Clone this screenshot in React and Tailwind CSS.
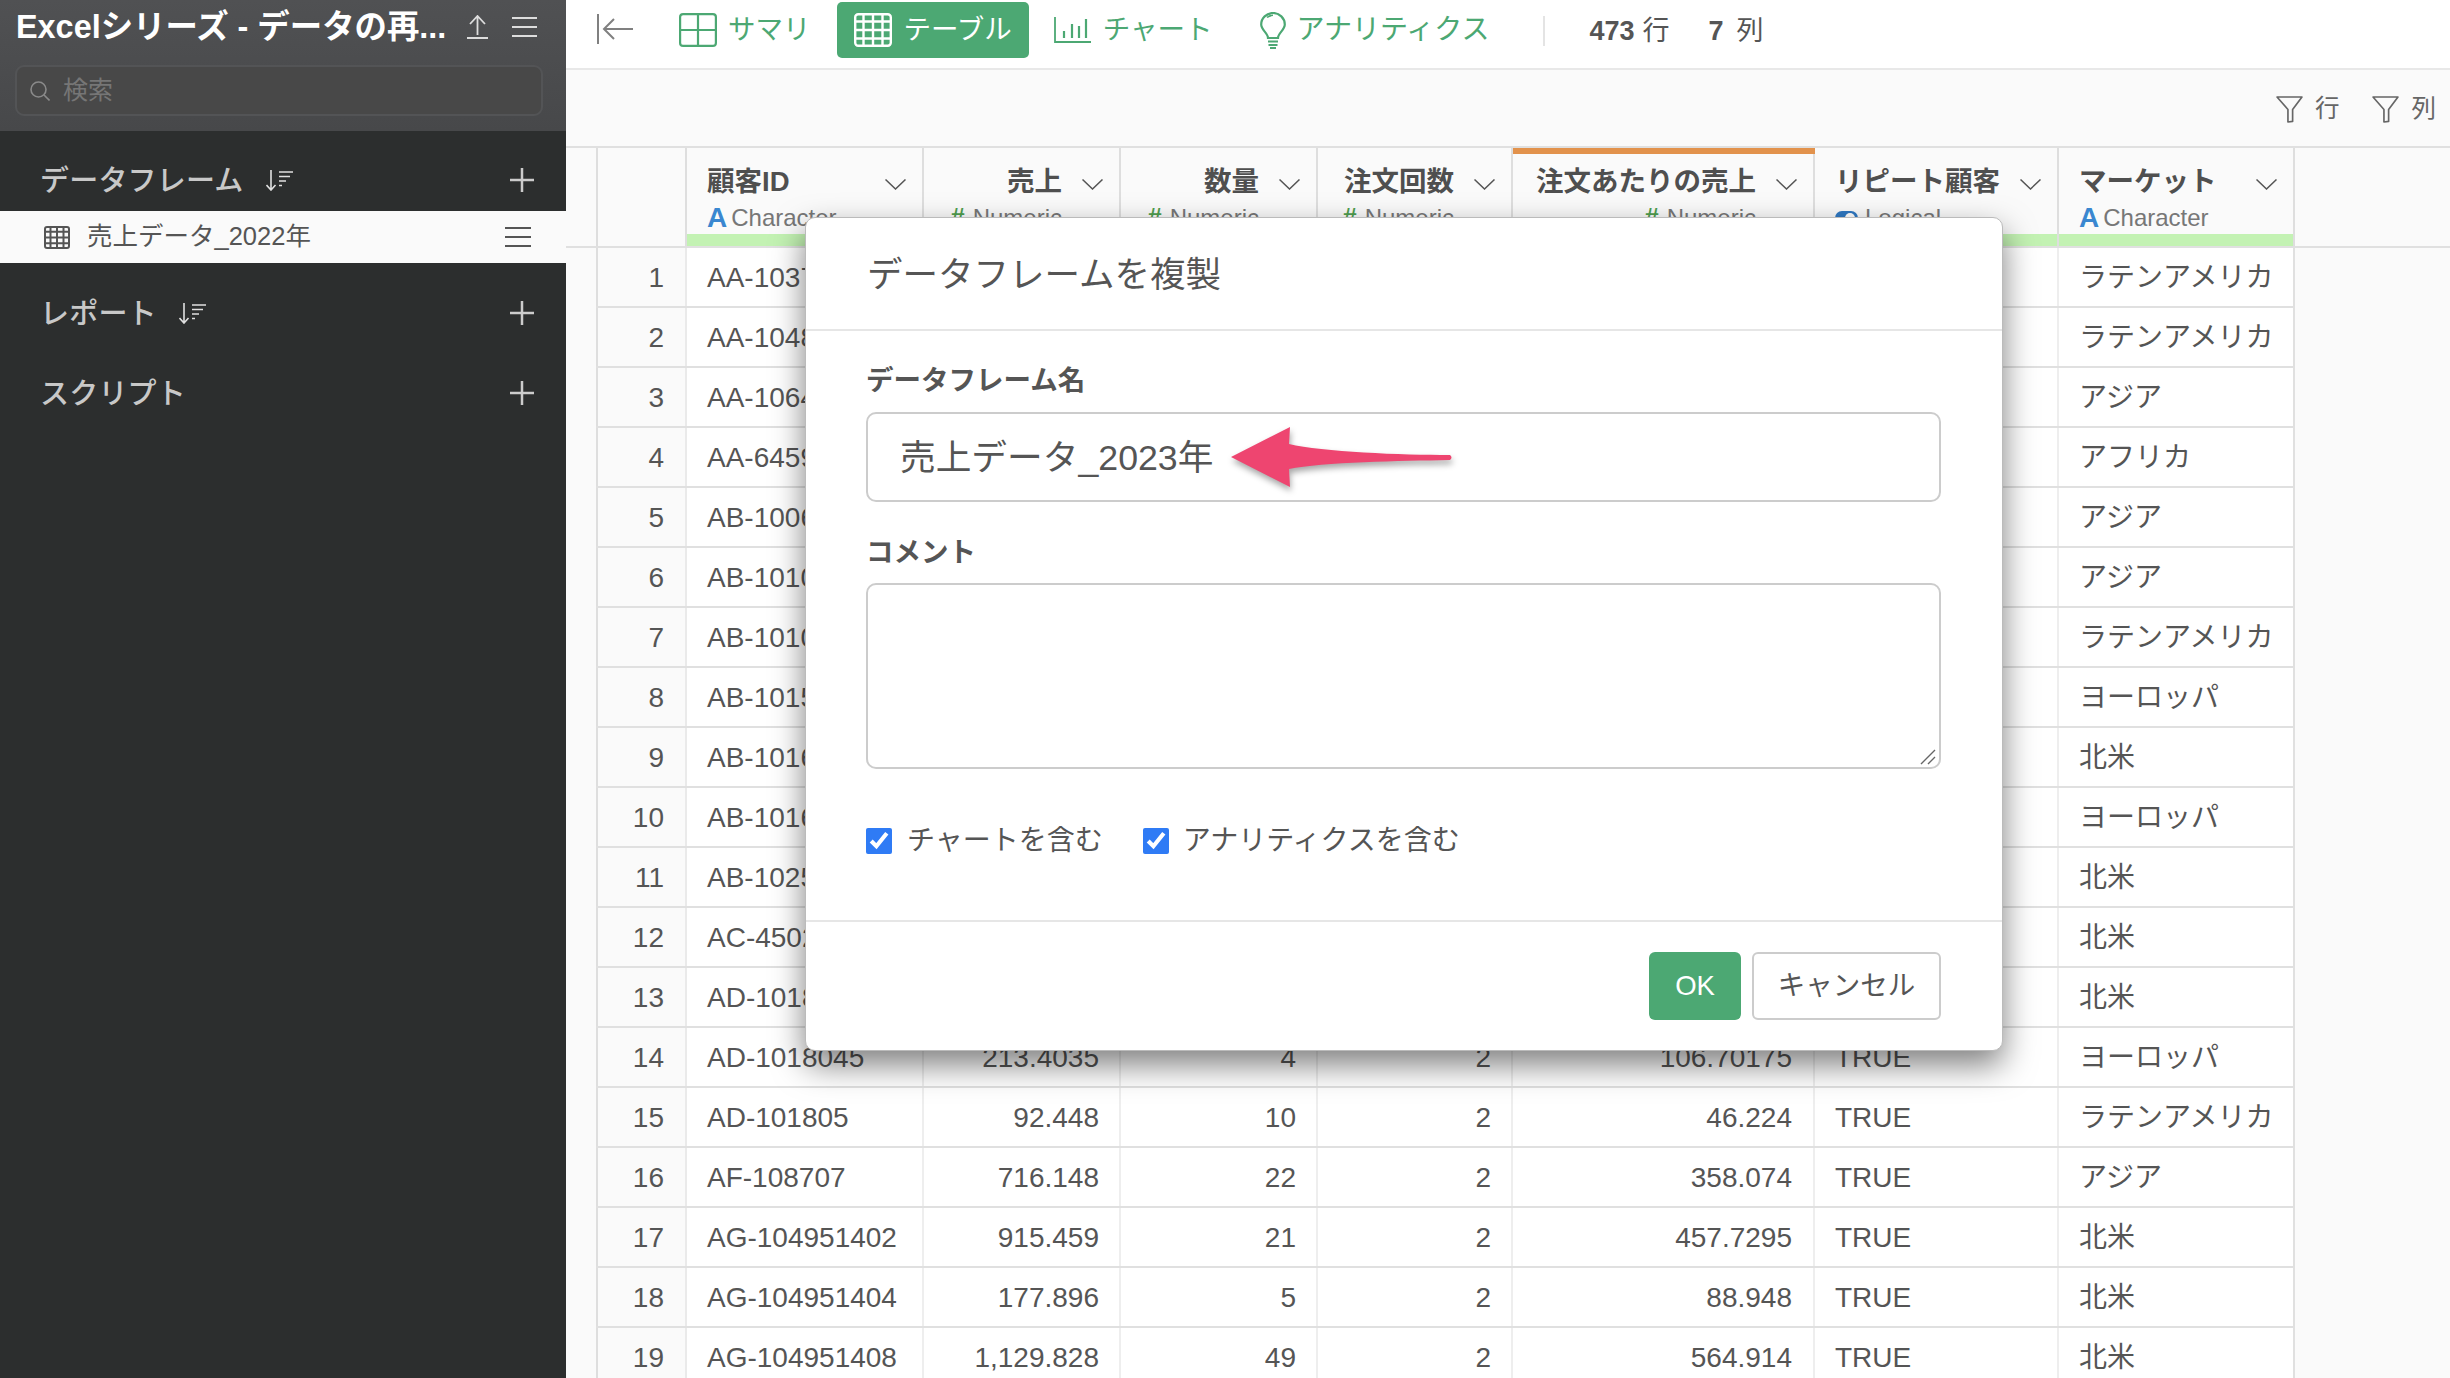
import React from "react";

const G = "#4ca873";

function Hamburger({ w = 25, h = 20, color = "#ddd", sw = 2 }) {
  return (
    <svg width={w} height={h} viewBox={`0 0 ${w} ${h}`} fill="none" stroke={color} strokeWidth={sw}>
      <path d={`M0 1H${w}M0 ${h / 2}H${w}M0 ${h - 1}H${w}`} />
    </svg>
  );
}
function Plus() {
  return (
    <svg width="24" height="24" viewBox="0 0 24 24" stroke="#ccc" strokeWidth="2.5">
      <path d="M12 0V24M0 12H24" />
    </svg>
  );
}
function SortIcon() {
  return (
    <svg width="28" height="21" viewBox="0 0 28 21" fill="none" stroke="#e0e0e0" strokeWidth="1.6">
      <path d="M5 0V20M0.5 15L5 20L9.5 15" />
      <path d="M13 2H27M13 6.5H24M13 11H20M13 15.5H16" />
    </svg>
  );
}
function TableIcon({ w = 26, h = 23, color = "#555", cols = 4, rows = 4, sw = 2, r = 2 }) {
  const lines = [];
  for (let i = 1; i < cols; i++) lines.push(`M${(w * i) / cols} 1V${h - 1}`);
  for (let i = 1; i < rows; i++) lines.push(`M1 ${(h * i) / rows}H${w - 1}`);
  return (
    <svg width={w} height={h} viewBox={`0 0 ${w} ${h}`} fill="none" stroke={color} strokeWidth={sw}>
      <rect x={sw / 2} y={sw / 2} width={w - sw} height={h - sw} rx={r} />
      <path d={lines.join("")} />
    </svg>
  );
}
function Chevron() {
  return (
    <svg width="21" height="11" viewBox="0 0 21 11" fill="none" stroke="#555" strokeWidth="1.5" className="shrink-0">
      <path d="M0.5 0.5L10.5 10L20.5 0.5" />
    </svg>
  );
}
function Funnel() {
  return (
    <svg width="27" height="27" viewBox="0 0 26 26" fill="none" stroke="#666" strokeWidth="1.6">
      <path d="M1 1H25L16 13V24.5L11.5 25V13Z" strokeLinejoin="round" />
    </svg>
  );
}

const columns = [
  { name: "顧客ID", type: "char", left: true },
  { name: "売上", type: "num" },
  { name: "数量", type: "num" },
  { name: "注文回数", type: "num" },
  { name: "注文あたりの売上", type: "num", orange: true },
  { name: "リピート顧客", type: "logical", left: true },
  { name: "マーケット", type: "char", left: true },
];

const rows = [
  ["AA-1037", "", "", "", "", "", "ラテンアメリカ"],
  ["AA-1048", "", "", "", "", "", "ラテンアメリカ"],
  ["AA-1064", "", "", "", "", "", "アジア"],
  ["AA-6459", "", "", "", "", "", "アフリカ"],
  ["AB-1006", "", "", "", "", "", "アジア"],
  ["AB-1010", "", "", "", "", "", "アジア"],
  ["AB-1010", "", "", "", "", "", "ラテンアメリカ"],
  ["AB-1015", "", "", "", "", "", "ヨーロッパ"],
  ["AB-1016", "", "", "", "", "", "北米"],
  ["AB-1016", "", "", "", "", "", "ヨーロッパ"],
  ["AB-1025", "", "", "", "", "", "北米"],
  ["AC-4502", "", "", "", "", "", "北米"],
  ["AD-1018", "", "", "", "", "", "北米"],
  ["AD-1018045", "213.4035", "4", "2", "106.70175", "TRUE", "ヨーロッパ"],
  ["AD-101805", "92.448", "10", "2", "46.224", "TRUE", "ラテンアメリカ"],
  ["AF-108707", "716.148", "22", "2", "358.074", "TRUE", "アジア"],
  ["AG-104951402", "915.459", "21", "2", "457.7295", "TRUE", "北米"],
  ["AG-104951404", "177.896", "5", "2", "88.948", "TRUE", "北米"],
  ["AG-104951408", "1,129.828", "49", "2", "564.914", "TRUE", "北米"],
];

function TypeLabel({ type }) {
  if (type === "char")
    return (
      <>
        <span className="font-bold text-[#3a87d0] text-[28px] mr-[4px]">A</span>
        <span>Character</span>
      </>
    );
  if (type === "num")
    return (
      <>
        <span className="font-bold text-[#4f9e4f] text-[25px] mr-[8px]">#</span>
        <span>Numeric</span>
      </>
    );
  return (
    <>
      <svg width="23" height="16" viewBox="0 0 23 16" className="mr-[7px]">
        <rect x="0" y="1" width="23" height="14" rx="7" fill="#2f78c2" />
        <circle cx="15" cy="8" r="5" fill="#fff" />
      </svg>
      <span>Logical</span>
    </>
  );
}

function HeaderCell({ c }) {
  return (
    <div className={`h-[98px] flex flex-col border-r-2 border-[#dedede] ${c.orange ? "" : "pt-[16px]"}`}>
      {c.orange && <div className="h-[6px] bg-[#e2924c] mb-[10px] -mr-[2px]" />}
      <div className="h-[36px] flex items-center pl-[20px] pr-[16px]">
        <span className={`font-bold text-[27.5px] text-[#4f4f4f] leading-none ${c.left ? "" : "ml-auto"}`}>{c.name}</span>
        <span className={`${c.left ? "ml-auto" : "ml-[20px]"} mt-[5px] flex`}>
          <Chevron />
        </span>
      </div>
      <div className={`h-[30px] mt-[3px] flex items-center text-[24px] text-[#777] ${c.left ? "pl-[20px]" : "justify-end pr-[57px]"}`}>
        <TypeLabel type={c.type} />
      </div>
      <div className="mt-auto h-[12px] bg-[#c3f2b3]" />
    </div>
  );
}

function Nav({ icon, label, active, className = "" }) {
  return (
    <div
      className={`flex items-center h-[56px] rounded-[5px] text-[27.5px] ${active ? "bg-[#4ca873] text-white px-[17px] gap-[12px]" : "text-[#4ca873] gap-[11px]"} ${className}`}
    >
      {icon}
      <span>{label}</span>
    </div>
  );
}

function Section({ label, sort = true, className = "" }) {
  return (
    <div className={`flex items-center h-[40px] pl-[40px] pr-[32px] ${className}`}>
      <span className="text-[29px] font-medium text-[#c8c8c8] leading-none mt-[2px] tracking-[0.2px]">{label}</span>
      {sort && (
        <span className="flex ml-[22px] mt-[1px]">
          <SortIcon />
        </span>
      )}
      <span className="ml-auto flex">
        <Plus />
      </span>
    </div>
  );
}

export default function App() {
  return (
    <div className="relative w-[2450px] h-[1378px] overflow-hidden flex bg-[#fafafa] text-[#555] [font-family:'Liberation_Sans','Noto_Sans_CJK_JP',sans-serif]">
      {/* Sidebar */}
      <aside className="w-[566px] shrink-0 bg-[#2c2e2e] flex flex-col">
        <div className="h-[131px] bg-gradient-to-b from-[#505153] to-[#47484a] pl-[16px] pr-[28px]">
          <div className="h-[54px] flex items-center">
            <span className="text-[32.4px] font-bold text-white leading-none whitespace-nowrap">Excelシリーズ - データの再...</span>
            <svg width="21" height="24" viewBox="0 0 21 24" fill="none" stroke="#ddd" strokeWidth="1.8" className="ml-[21px]">
              <path d="M10.5 1V20M3 9L10.5 1L18 9M0 23H21" />
            </svg>
            <span className="ml-[24px] flex">
              <Hamburger />
            </span>
          </div>
          <div className="mt-[11px] -ml-[1px] w-[528px] h-[51px] rounded-[9px] border-2 border-[#535456] bg-[#484848] flex items-center pl-[13px] gap-[13px]">
            <svg width="20" height="20" viewBox="0 0 20 20" fill="none" stroke="#8a8a8a" strokeWidth="1.6">
              <circle cx="8.5" cy="8.5" r="7.5" />
              <path d="M14 14L19.5 19.5" />
            </svg>
            <span className="text-[25px] text-[#767676] leading-none">検索</span>
          </div>
        </div>
        <Section label="データフレーム" className="mt-[29px]" />
        <div className="mt-[11px] h-[52px] bg-[#fafafa] flex items-center pl-[44px] pr-[35px]">
          <TableIcon />
          <span className="ml-[17px] text-[25.5px] text-[#555] leading-none">売上データ_2022年</span>
          <span className="ml-auto flex">
            <Hamburger w={26} h={20} color="#555" />
          </span>
        </div>
        <Section label="レポート" className="mt-[30px]" />
        <Section label="スクリプト" sort={false} className="mt-[40px]" />
      </aside>

      {/* Main */}
      <main className="flex-1 min-w-0 flex flex-col">
        <div className="h-[70px] shrink-0 bg-white border-b-2 border-[#e8e8e8] flex items-start pl-[31px]">
          <svg width="36" height="30" viewBox="0 0 36 30" fill="none" stroke="#808080" strokeWidth="2" className="mt-[14px]">
            <path d="M1 0V30M36 15H8M17 5L7 15L17 25" />
          </svg>
          <Nav
            className="ml-[46px] mt-[2px]"
            label="サマリ"
            icon={<TableIcon w={38} h={34} color={G} cols={2} rows={2} sw={2.2} r={3} />}
          />
          <Nav
            active
            className="ml-[26px] mt-[2px]"
            label="テーブル"
            icon={<TableIcon w={38} h={34} color="#fff" cols={4} rows={4} sw={2.4} r={3} />}
          />
          <Nav
            className="ml-[25px] mt-[2px]"
            label="チャート"
            icon={
              <svg width="38" height="26" viewBox="0 0 38 26" fill="none" stroke={G} strokeWidth="2">
                <path d="M1 0V25H37" strokeWidth="1.8" />
                <path d="M10 14V21M18 7V21M25 9V21M32 2V21" strokeWidth="2.2" />
              </svg>
            }
          />
          <Nav
            className="ml-[47px] mt-[2px] text-[28px]"
            label="アナリティクス"
            icon={
              <svg width="26" height="37" viewBox="0 0 26 37" fill="none" stroke={G} strokeWidth="2.2">
                <path d="M8 26C8 21 1.2 18 1.2 12.5A11.8 11.5 0 0 1 24.8 12.5C24.8 18 18 21 18 26Z" />
                <path d="M7 5.5C9 3.8 11 3.3 13 3.3" strokeWidth="1.6" />
                <path d="M8 29.5H18M8.5 33H17.5M10 36H16" />
              </svg>
            }
          />
          <div className="ml-[53px] mt-[16px] w-[2px] h-[30px] bg-[#e4e4e4]" />
          <div className="ml-[45px] h-[62px] flex items-center text-[27px] text-[#555] whitespace-nowrap">
            <span className="font-bold">473</span>
            <span className="ml-[8px]">行</span>
            <span className="font-bold ml-[39px]">7</span>
            <span className="ml-[13px]">列</span>
          </div>
        </div>

        <div className="h-[76px] shrink-0 flex items-center justify-end pr-[14px] pt-[3px] text-[24.5px] text-[#666]">
          <span className="ml-[2px] flex">
            <Funnel />
          </span>
          <span className="ml-[12px]">行</span>
          <span className="ml-[32px] flex">
            <Funnel />
          </span>
          <span className="ml-[13px]">列</span>
        </div>

        <div className="border-y-2 border-[#e0e0e0] pl-[30px]">
          <div className="grid grid-cols-[91px_237px_197px_197px_195px_302px_244px_236px] w-[1699px]">
            <div className="h-[98px] border-x-2 border-[#dedede]" />
            {columns.map((c) => (
              <HeaderCell key={c.name} c={c} />
            ))}
          </div>
        </div>

        <div className="pl-[30px]">
          {rows.map((r, i) => (
            <div
              key={i}
              className="grid grid-cols-[91px_237px_197px_197px_195px_302px_244px_236px] w-[1699px] h-[60px] border-b-2 border-[#e0e0e0] bg-white text-[28px] text-[#555] whitespace-nowrap"
            >
              <div className="bg-[#fafafa] border-x-2 border-l-[#dedede] border-r-[#eaeaea] flex items-center justify-end pr-[21px] pt-[1px]">{i + 1}</div>
              <div className="border-r-2 border-[#eee] flex items-center pl-[20px] pt-[1px]">{r[0]}</div>
              <div className="border-r-2 border-[#eee] flex items-center justify-end pr-[20px] pt-[1px]">{r[1]}</div>
              <div className="border-r-2 border-[#eee] flex items-center justify-end pr-[20px] pt-[1px]">{r[2]}</div>
              <div className="border-r-2 border-[#eee] flex items-center justify-end pr-[20px] pt-[1px]">{r[3]}</div>
              <div className="border-r-2 border-[#eee] flex items-center justify-end pr-[21px] pt-[1px]">{r[4]}</div>
              <div className="border-r-2 border-[#eee] flex items-center pl-[20px] pt-[1px]">{r[5]}</div>
              <div className="border-r-2 border-[#e0e0e0] flex items-center pl-[20px] pt-[1px] text-[28px]">{r[6]}</div>
            </div>
          ))}
        </div>
      </main>

      {/* Dialog */}
      <div className="absolute left-[805px] top-[217px] w-[1198px] h-[834px] bg-white rounded-[10px] border border-[#bbb] shadow-[0_14px_32px_rgba(0,0,0,0.5)] flex flex-col">
        <div className="h-[113px] shrink-0 border-b-2 border-[#e6e6e6] flex items-center pl-[61px] text-[35.5px] text-[#555] pt-[4px]">
          データフレームを複製
        </div>
        <div className="flex-1 pl-[60px] pr-[61px] pt-[31px]">
          <div className="h-[38px] flex items-center text-[27.5px] font-bold text-[#555]">データフレーム名</div>
          <div className="relative mt-[12px]">
            <input
              readOnly
              value="売上データ_2023年"
              className="block w-[1075px] h-[90px] rounded-[10px] border-2 border-[#ccc] pl-[32px] pb-[5px] text-[35.7px] text-[#555] outline-none bg-white"
            />
            <svg width="240" height="90" viewBox="0 0 240 90" className="absolute left-[356px] top-0 [filter:drop-shadow(1px_4px_3px_rgba(0,0,0,0.35))]">
              <path
                d="M9 45L68 15L67 32C100 40 180 43 228 43Q231 45.5 228 48C180 49 100 50 67 57L68 75Z"
                fill="#ee4570"
              />
            </svg>
          </div>
          <div className="mt-[32px] h-[38px] flex items-center text-[27.5px] font-bold text-[#555]">コメント</div>
          <div className="relative mt-[11px]">
            <textarea
              readOnly
              className="block resize-none w-[1075px] h-[186px] rounded-[10px] border-2 border-[#ccc] bg-white outline-none"
            />
            <svg width="16" height="16" viewBox="0 0 16 16" fill="none" stroke="#666" strokeWidth="1.4" className="absolute right-[5px] bottom-[4px]">
              <path d="M1 15L15 1M8 15L15 8" />
            </svg>
          </div>
          <div className="mt-[51px] flex items-center text-[28px] text-[#555]">
            <input type="checkbox" defaultChecked className="w-[26px] h-[26px] accent-[#2f7bf5] m-0" />
            <span className="ml-[15px]">チャートを含む</span>
            <input type="checkbox" defaultChecked className="ml-[40px] w-[26px] h-[26px] accent-[#2f7bf5] m-0" />
            <span className="ml-[14px]">アナリティクスを含む</span>
          </div>
        </div>
        <div className="h-[130px] shrink-0 border-t-2 border-[#e6e6e6] flex justify-end gap-[11px] pr-[61px] pt-[30px]">
          <div className="w-[92px] h-[68px] rounded-[6px] bg-[#4ca873] text-white text-[27.5px] flex items-center justify-center">OK</div>
          <div className="w-[189px] h-[68px] rounded-[6px] border-2 border-[#ccc] bg-white text-[27.5px] text-[#555] flex items-center justify-center">キャンセル</div>
        </div>
      </div>
    </div>
  );
}
